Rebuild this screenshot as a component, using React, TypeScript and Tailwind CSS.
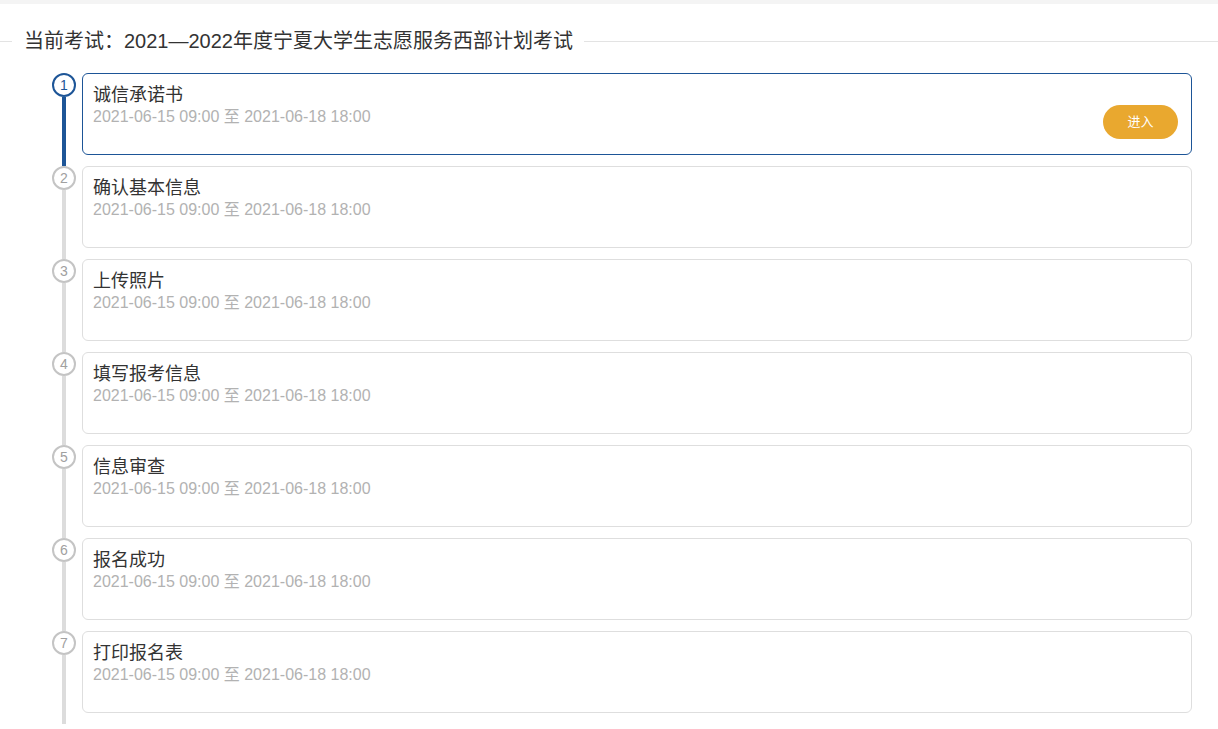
const steps = [
  '诚信承诺书',
  '确认基本信息',
  '上传照片',
  '填写报考信息',
  '信息审查',
  '报名成功',
  '打印报名表',
];

const period = '2021-06-15 09:00 至 2021-06-18 18:00';

function Step({ index, title, active }: { index: number; title: string; active: boolean }) {
  return (
    <div className="flex">
      <div className="flex w-6 flex-col items-center">
        <div
          className={
            active
              ? 'flex h-6 w-6 shrink-0 items-center justify-center rounded-full border-2 border-[#1d5597] bg-white text-[14px] leading-none text-[#1d5597]'
              : 'flex h-6 w-6 shrink-0 items-center justify-center rounded-full border-2 border-[#c4c4c4] bg-white text-[14px] leading-none text-[#a0a0a0]'
          }
        >
          {index}
        </div>
        <div className={active ? 'w-1 flex-1 bg-[#1d5597]' : 'w-1 flex-1 bg-[#dcdcdc]'} />
      </div>
      <div
        className={
          active
            ? 'mb-[11px] ml-[6px] mr-[26px] flex h-[82px] flex-1 rounded-md border border-[#1d5597] bg-white pl-[10px] pr-[13px] pt-[10px]'
            : 'mb-[11px] ml-[6px] mr-[26px] flex h-[82px] flex-1 rounded-md border border-[#dedede] bg-white pl-[10px] pr-[13px] pt-[10px]'
        }
      >
        <div className="flex-1">
          <div className="text-[18px] leading-[22px] text-[#333]">{title}</div>
          <div className="text-[16px] leading-[22px] text-[#b2b2b2]">{period}</div>
        </div>
        {active && (
          <button className="mt-[21px] h-[34px] w-[75px] self-start rounded-full bg-[#e9a82f] text-[13px] text-white">
            进入
          </button>
        )}
      </div>
    </div>
  );
}

export default function App() {
  return (
    <div className="min-h-screen bg-white" style={{ fontFamily: '"Liberation Sans", "Noto Sans CJK SC", sans-serif' }}>
      <div className="h-1 bg-[#f4f4f4]" />
      <div className="mt-[22px] flex h-[30px] items-center">
        <div className="h-px w-3 bg-[#e3e3e3]" />
        <div className="pl-3 pr-[11px] text-[20px] text-[#333]">当前考试：2021—2022年度宁夏大学生志愿服务西部计划考试</div>
        <div className="h-px flex-1 bg-[#e3e3e3]" />
      </div>
      <div className="mt-[17px] pl-[52px]">
        {steps.map((s, i) => (
          <Step key={s} index={i + 1} title={s} active={i === 0} />
        ))}
      </div>
    </div>
  );
}
